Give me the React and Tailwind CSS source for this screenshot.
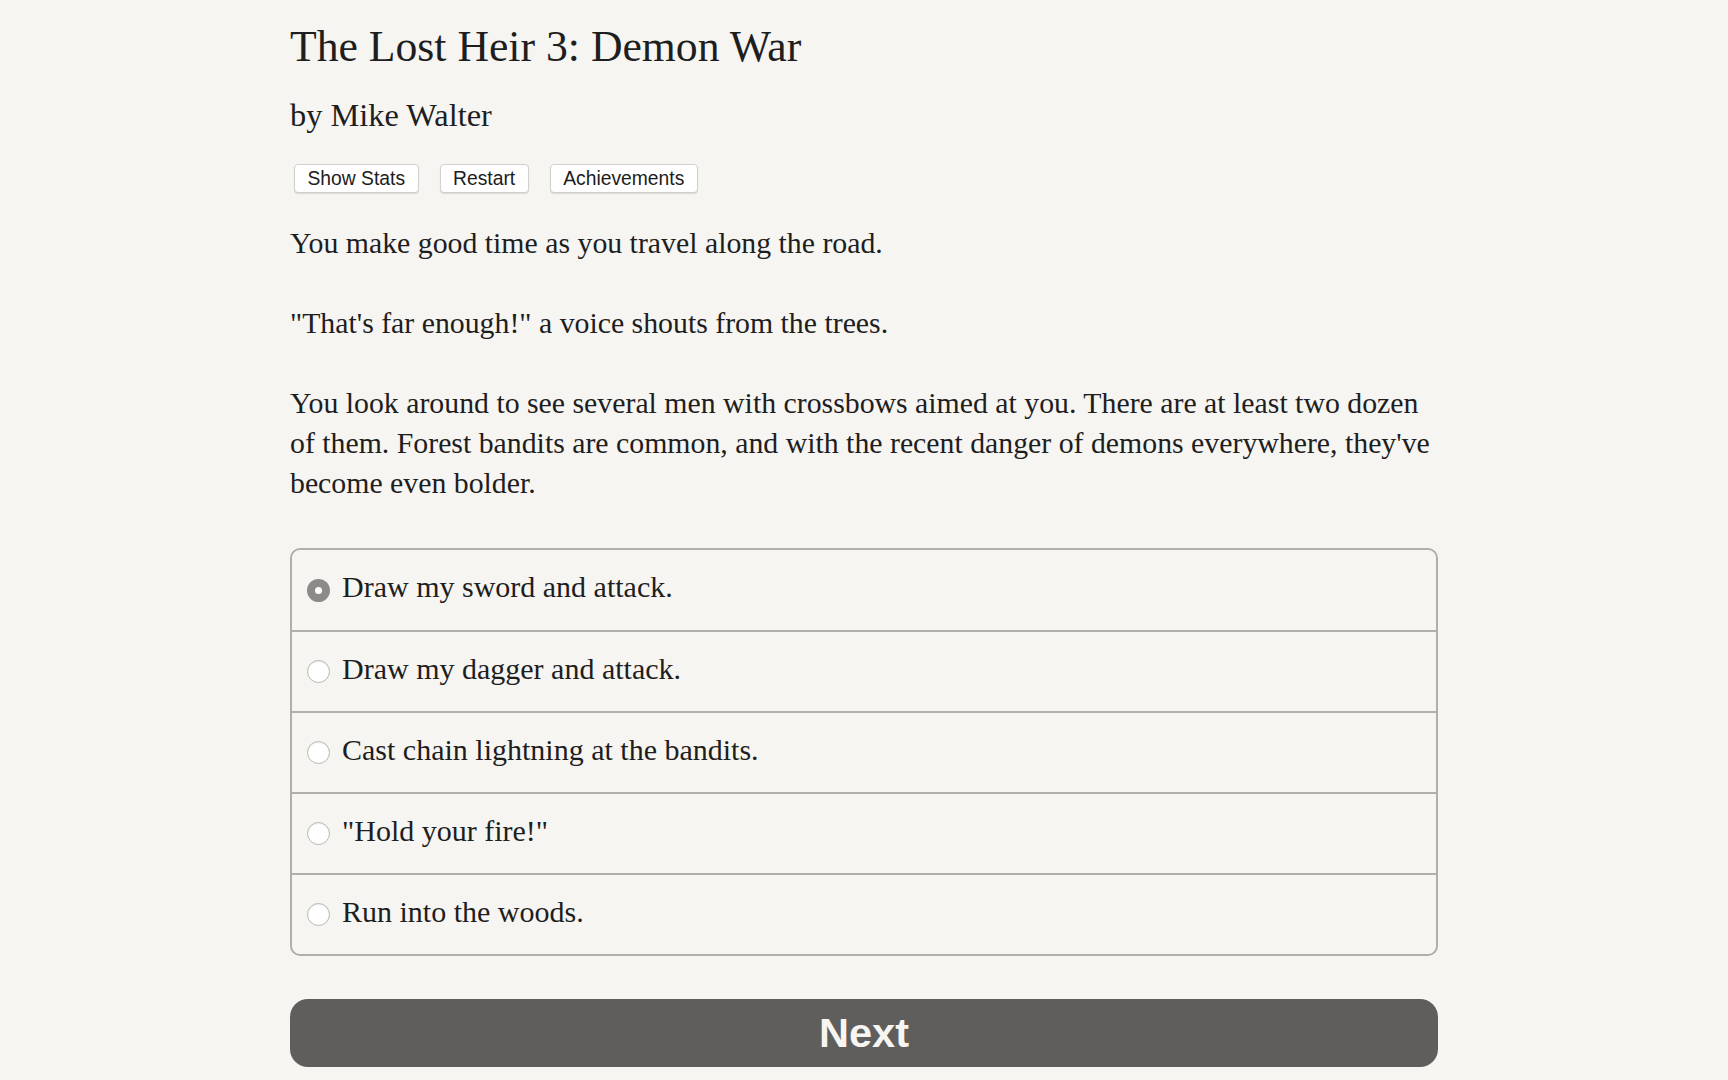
import React from "react";

const serif = { fontFamily: '"Liberation Serif", "Times New Roman", serif' };

const choices = [
  "Draw my sword and attack.",
  "Draw my dagger and attack.",
  "Cast chain lightning at the bandits.",
  "\"Hold your fire!\"",
  "Run into the woods.",
];

function Radio({ checked }) {
  if (checked) {
    return (
      <span className="flex h-[23px] w-[23px] shrink-0 items-center justify-center rounded-full bg-[#8c8b8a]">
        <span className="h-[7px] w-[7px] rounded-full bg-white" />
      </span>
    );
  }
  return (
    <span className="h-[23px] w-[23px] shrink-0 rounded-full border border-[#b9b7b4] bg-white shadow-[inset_0_1px_1px_rgba(0,0,0,0.08)]" />
  );
}

function Btn({ children }) {
  return (
    <button className="h-[29px] rounded-[4px] border border-[#d2d0cc] bg-white px-[12.5px] text-[19.3px] leading-none text-[#1c1c1c] shadow-[0_1px_1px_rgba(0,0,0,0.12)] [font-family:'Liberation_Sans',Arial,sans-serif]">
      {children}
    </button>
  );
}

export default function App() {
  return (
    <div className="min-h-[1080px] w-full bg-[#f7f5f2] text-[#1e1e1e]">
      <div className="mx-auto w-[1148px] pt-[21px]" style={serif}>
        <h1 className="text-[43.7px] leading-[50px] font-normal">The Lost Heir 3: Demon War</h1>
        <h2 className="mt-[24px] text-[32.4px] leading-[40px] font-normal">by Mike Walter</h2>
        <div className="mt-[29px] flex gap-[21px] pl-[4px]">
          <Btn>Show Stats</Btn>
          <Btn>Restart</Btn>
          <Btn>Achievements</Btn>
        </div>
        <div className="mt-[30px] text-[29.8px] leading-[40px]">
          <p>You make good time as you travel along the road.</p>
          <p className="mt-[40px]">"That's far enough!" a voice shouts from the trees.</p>
          <p className="mt-[40px]">
            You look around to see several men with crossbows aimed at you. There are at least two dozen of them. Forest bandits are common, and with the recent danger of demons everywhere, they've become even bolder.
          </p>
        </div>
        <div className="mt-[45px] overflow-hidden rounded-[10px] border-2 border-[#b1afab]">
          {choices.map((c, i) => (
            <div
              key={i}
              className={
                "flex items-center gap-[12px] pl-[15px] text-[30px] " +
                (i > 0 ? "h-[81px] border-t-2 border-[#b1afab]" : "h-[80px]")
              }
            >
              <Radio checked={i === 0} />
              <span className="mb-[6px] leading-none">{c}</span>
            </div>
          ))}
        </div>
        <button className="mt-[43px] flex h-[68px] w-full items-center justify-center rounded-[18px] bg-[#5f5e5c] text-[41.5px] font-bold text-[#f7f5f2] [font-family:'Liberation_Sans',Arial,sans-serif]">
          Next
        </button>
      </div>
    </div>
  );
}
